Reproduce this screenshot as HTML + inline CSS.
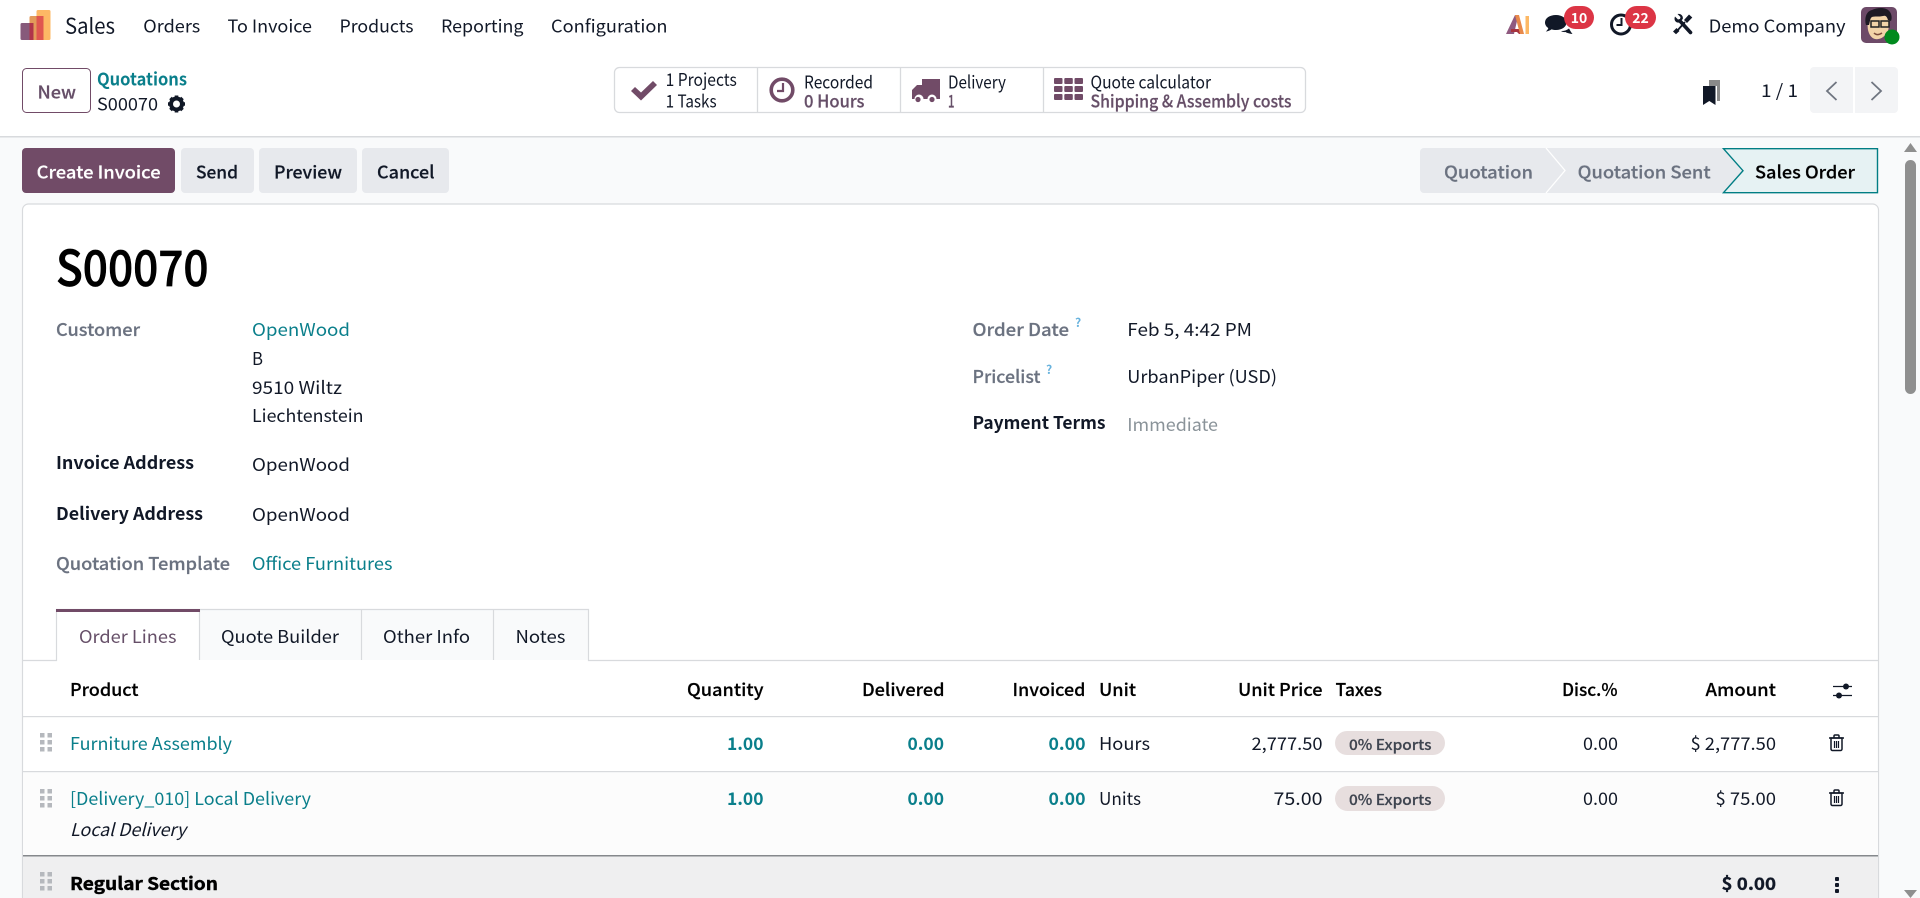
<!DOCTYPE html>
<html lang="en">
<head>
<meta charset="utf-8">
<title>S00070 - Sales</title>
<style>
html,body{margin:0;padding:0;width:1920px;height:898px;overflow:hidden;background:#fff}
svg{display:block}
text{font-family:"Noto Sans CJK JP","Liberation Sans",sans-serif;font-size:17.5px;fill:#111827;white-space:pre}
.m{font-weight:500;stroke:#111827;stroke-width:.2px}
.b{font-weight:700}
.g{fill:#6b7280}
.m.g{stroke:#6b7280}
.l{fill:#0a7f8b}
.p{fill:#664f68}
.m.p{stroke:#664f68}
.n{fill:#0a7f8b;font-weight:700}
</style>
</head>
<body>
<svg width="1920" height="898" viewBox="0 0 1920 898" xmlns="http://www.w3.org/2000/svg">
<!-- backgrounds -->
<rect width="1920" height="898" fill="#f9fafb"/>
<rect width="1920" height="136" fill="#fff"/>
<rect y="136" width="1920" height="1.5" fill="#d8dadd"/>

<!-- logo -->
<rect x="36.5" y="10" width="14" height="30" rx="1.5" fill="#fdb865"/>
<rect x="29.5" y="16" width="14" height="24" rx="1.5" fill="#e39a5a"/>
<rect x="36.5" y="16" width="7" height="24" fill="#e0564f"/>
<rect x="20.5" y="23" width="11" height="17" rx="1.5" fill="#875a7b"/>
<rect x="29.5" y="23" width="4" height="17" fill="#b0344a"/>
<text x="65" y="33.5" style="font-size:21px" textLength="50" lengthAdjust="spacingAndGlyphs">Sales</text>

<!-- menu -->
<text x="143.3" y="32.3" textLength="57" lengthAdjust="spacingAndGlyphs">Orders</text>
<text x="227.5" y="32.3" textLength="84.5" lengthAdjust="spacingAndGlyphs">To Invoice</text>
<text x="339.5" y="32.3" textLength="74" lengthAdjust="spacingAndGlyphs">Products</text>
<text x="441" y="32.3" textLength="82.5" lengthAdjust="spacingAndGlyphs">Reporting</text>
<text x="551" y="32.3" textLength="116.5" lengthAdjust="spacingAndGlyphs">Configuration</text>

<!-- systray -->
<path d="M1506 34l9-19h3l-1 6-3 13z" fill="#8f5a80"/>
<path d="M1511 29h9l2 5h-3l-2-2h-6z" fill="#a8343f"/>
<path d="M1515 15h4l5 19h-4z" fill="#e8894a"/>
<rect x="1525.5" y="16" width="3.5" height="18" fill="#fdb865"/>

<path d="M1556 15c-6.500 0-11 3.200-11 7.500 0 2.300 1.300 4.200 3.300 5.600-.4 1.300-1.300 2.400-2.500 3.400 2.300-.2 4.200-1 5.700-2.100 1.400.4 3 .6 4.500.6 6 0 10.500-3.200 10.500-7.500s-4.500-7.500-10.500-7.500z" fill="#111827"/>
<path d="M1561 31c3 .2 6-.8 8-2.500 1 1.700 1.800 3.500 3.500 5.500-2.700-.2-5.500-1-7-2-1.500.2-3 0-4.500-1z" fill="#111827"/>
<rect x="1564" y="6" width="30" height="23" rx="11.500" fill="#dc3545"/>
<text x="1579" y="23" text-anchor="middle" class="b" style="font-size:14px;fill:#fff">10</text>

<circle cx="1621" cy="24.500" r="9.500" fill="none" stroke="#111827" stroke-width="3"/>
<path d="M1621.500 18v7h-5" fill="none" stroke="#111827" stroke-width="2"/>
<rect x="1625" y="6" width="31" height="23" rx="11.500" fill="#dc3545"/>
<text x="1640.500" y="23" text-anchor="middle" class="b" style="font-size:14px;fill:#fff">22</text>

<!-- tools: wrench + screwdriver -->
<path d="M1680 21l10.500 11.500" stroke="#111827" stroke-width="3.600" fill="none" stroke-linecap="round"/>
<path d="M1675 16.500l3 3 2-.5.5-2-3-3c3-.8 6 1.500 5.300 5l-3.500 3.500c-3.500.7-5.800-2.500-4.300-6z" fill="#111827"/>
<path d="M1677 31l8-9" stroke="#111827" stroke-width="1.800" fill="none"/>
<path d="M1684 20l5-5.500 3.300 3-5.300 5.500zM1673 31.500l3.500-3.500 3 3-3.500 3.300z" fill="#111827"/>
<text x="1708.600" y="32.300" textLength="137" lengthAdjust="spacingAndGlyphs">Demo Company</text>

<!-- avatar -->
<rect x="1861" y="7" width="36" height="36" rx="5" fill="#6d4a68"/>
<path d="M1868 30c-1-8 0-15 6-17 5-2 13-1 15 4 1 4 0 10-1 14-3 6-8 9-13 8-4-1-6-5-7-9z" fill="#f2d3a8"/>
<path d="M1866 25c-2-8 1-14 6-15 6-3 15-3 18 2 2 3 2 7 1 9l-3-1c-1-3-2-5-5-4-4 1-9 0-11 1-2 1-2 5-3 8z" fill="#1e1a24"/>
<rect x="1871" y="21" width="8" height="6" fill="none" stroke="#222" stroke-width="1.500"/>
<rect x="1881" y="21" width="8" height="6" fill="none" stroke="#222" stroke-width="1.500"/>
<path d="M1874 33c2 2 5 2 8 0" fill="none" stroke="#7a4a3a" stroke-width="1.500"/>
<circle cx="1892" cy="37" r="7.500" fill="#008a1e"/>

<!-- New button + breadcrumb -->
<rect x="22.500" y="68.500" width="68" height="44" rx="4" fill="#fff" stroke="#714b67"/>
<text x="37.500" y="98.500" class="m p" textLength="38.500" lengthAdjust="spacingAndGlyphs">New</text>
<text x="97" y="85.500" class="b l" textLength="90" lengthAdjust="spacingAndGlyphs">Quotations</text>
<text x="97" y="110.500" textLength="61" lengthAdjust="spacingAndGlyphs">S00070</text>
<g transform="translate(176.500 104)" fill="#111827">
<circle r="5.500" fill="none" stroke="#111827" stroke-width="4"/>
<path d="M-1.800-8.500h3.600v3.600h-3.600zM-1.800 4.900h3.600v3.600h-3.600zM-8.500-1.800h3.600v3.600h-3.600zM4.900-1.800h3.600v3.600h-3.600z"/>
<path d="M-1.800-8.500h3.600v3.600h-3.600zM-1.800 4.900h3.600v3.600h-3.600zM-8.500-1.800h3.600v3.600h-3.600zM4.900-1.800h3.600v3.600h-3.600z" transform="rotate(45)"/>
</g>

<!-- stat buttons -->
<rect x="614.500" y="67.500" width="691" height="45" rx="5" fill="#fff" stroke="#d8dadd" stroke-width="1.300"/>
<path d="M757.500 68v44M900.500 68v44M1043.500 68v44" stroke="#d8dadd" stroke-width="1.300"/>
<path d="M631 91l4-4 6 5.500L653 81l4 4-16 15.500z" fill="#714b67"/>
<text x="665.600" y="86.200" textLength="71.200" lengthAdjust="spacingAndGlyphs">1 Projects</text>
<text x="665.600" y="107.700" textLength="51" lengthAdjust="spacingAndGlyphs">1 Tasks</text>
<circle cx="782" cy="90" r="10.800" fill="none" stroke="#714b67" stroke-width="3.600"/>
<path d="M783 83v8h-6" fill="none" stroke="#714b67" stroke-width="2.200"/>
<text x="804" y="88.300" textLength="69" lengthAdjust="spacingAndGlyphs">Recorded</text>
<text x="804" y="107.500" class="m p" textLength="60.500" lengthAdjust="spacingAndGlyphs">0 Hours</text>
<path d="M922 79h18v20h-3.500a4.500 4.500 0 0 0-9 0h-4a4.500 4.500 0 0 0-9 0H912V90l5-5h5z" fill="#714b67"/>
<circle cx="918" cy="99.500" r="2.600" fill="#714b67"/><circle cx="932" cy="99.500" r="2.600" fill="#714b67"/>
<text x="948" y="88.300" textLength="58" lengthAdjust="spacingAndGlyphs">Delivery</text>
<text x="948" y="107.500" class="m p" textLength="6.500" lengthAdjust="spacingAndGlyphs">1</text>
<g fill="#714b67">
<rect x="1054" y="78" width="8.500" height="6" rx="1"/><rect x="1064.300" y="78" width="8.500" height="6" rx="1"/><rect x="1074.500" y="78" width="8.500" height="6" rx="1"/>
<rect x="1054" y="86" width="8.500" height="6" rx="1"/><rect x="1064.300" y="86" width="8.500" height="6" rx="1"/><rect x="1074.500" y="86" width="8.500" height="6" rx="1"/>
<rect x="1054" y="94" width="8.500" height="6" rx="1"/><rect x="1064.300" y="94" width="8.500" height="6" rx="1"/><rect x="1074.500" y="94" width="8.500" height="6" rx="1"/>
</g>
<text x="1090.500" y="88.300" textLength="120.500" lengthAdjust="spacingAndGlyphs">Quote calculator</text>
<text x="1090.500" y="107.500" class="m p" textLength="201" lengthAdjust="spacingAndGlyphs">Shipping &amp; Assembly costs</text>

<!-- bookmark + pager -->
<path d="M1709 80h11v21h-3v-15h-8z" fill="#8a8a8a"/>
<path d="M1703 86h12.500v19l-6.200-4-6.300 4z" fill="#111827"/>
<text x="1761" y="97" textLength="37" lengthAdjust="spacingAndGlyphs">1 / 1</text>
<path d="M1810 71a4 4 0 0 1 4-4h39v46h-39a4 4 0 0 1-4-4z" fill="#f3f4f6"/>
<path d="M1855 67h39a4 4 0 0 1 4 4v38a4 4 0 0 1-4 4h-39z" fill="#f3f4f6"/>
<path d="M1836.500 82l-9.500 9 9.500 9" fill="none" stroke="#6f7580" stroke-width="1.800"/>
<path d="M1871.500 82l9.500 9-9.500 9" fill="none" stroke="#6f7580" stroke-width="1.800"/>

<!-- action buttons -->
<rect x="22" y="148" width="153" height="45" rx="4" fill="#714b67"/>
<text x="36.600" y="178.600" class="m" style="fill:#fff;stroke:#fff" textLength="124" lengthAdjust="spacingAndGlyphs">Create Invoice</text>
<rect x="181" y="148" width="73" height="45" rx="4" fill="#e7e9ed"/>
<text x="196" y="178.600" class="m" textLength="42" lengthAdjust="spacingAndGlyphs">Send</text>
<rect x="259" y="148" width="98" height="45" rx="4" fill="#e7e9ed"/>
<text x="274" y="178.600" class="m" textLength="68" lengthAdjust="spacingAndGlyphs">Preview</text>
<rect x="362" y="148" width="87" height="45" rx="4" fill="#e7e9ed"/>
<text x="377" y="178.600" class="m" textLength="57.500" lengthAdjust="spacingAndGlyphs">Cancel</text>

<!-- statusbar -->
<path d="M1424 148h299l20 22.500-20 22.500h-299a4 4 0 0 1-4-4v-37a4 4 0 0 1 4-4z" fill="#e7e9ed"/>
<path d="M1546 148l19 22.500-19 22.500" fill="none" stroke="#fff" stroke-width="1.300"/>
<path d="M1723.500 148.700h154v44h-154l19.500-22z" fill="#e6f2f3" stroke="#017e84" stroke-width="1.400"/>
<text x="1444" y="178.600" class="m g" textLength="89" lengthAdjust="spacingAndGlyphs">Quotation</text>
<text x="1577.700" y="178.600" class="m g" textLength="133" lengthAdjust="spacingAndGlyphs">Quotation Sent</text>
<text x="1755" y="178.600" class="m" style="fill:#000;stroke:#000" textLength="100" lengthAdjust="spacingAndGlyphs">Sales Order</text>

<!-- scrollbar -->
<path d="M1904 152l6.500-9 6.500 9z" fill="#8f8f8f"/>
<rect x="1905" y="160" width="11" height="234" rx="5.500" fill="#8f8f8f"/>
<path d="M1904 890h13l-6.500 8z" fill="#8f8f8f"/>

<!-- sheet -->
<path d="M22.500 904V210a6 6 0 0 1 6-6h1844a6 6 0 0 1 6 6v694z" fill="#fff" stroke="#d8dadd" stroke-width="1.200"/>

<text x="56" y="286" class="m" style="font-size:49px;fill:#000;stroke:#000;stroke-width:.7px" textLength="152.500" lengthAdjust="spacingAndGlyphs">S00070</text>

<!-- form left -->
<text x="56" y="336" class="m g" textLength="84" lengthAdjust="spacingAndGlyphs">Customer</text>
<text x="252" y="336" class="l" textLength="98" lengthAdjust="spacingAndGlyphs">OpenWood</text>
<text x="252" y="365" textLength="11" lengthAdjust="spacingAndGlyphs">B</text>
<text x="252" y="394" textLength="90" lengthAdjust="spacingAndGlyphs">9510 Wiltz</text>
<text x="252" y="422" textLength="111.500" lengthAdjust="spacingAndGlyphs">Liechtenstein</text>
<text x="56" y="469" class="b" textLength="138" lengthAdjust="spacingAndGlyphs">Invoice Address</text>
<text x="252" y="471" textLength="98" lengthAdjust="spacingAndGlyphs">OpenWood</text>
<text x="56" y="520" class="b" textLength="147" lengthAdjust="spacingAndGlyphs">Delivery Address</text>
<text x="252" y="521" textLength="98" lengthAdjust="spacingAndGlyphs">OpenWood</text>
<text x="56" y="570" class="m g" textLength="174" lengthAdjust="spacingAndGlyphs">Quotation Template</text>
<text x="252" y="570" class="l" textLength="140.500" lengthAdjust="spacingAndGlyphs">Office Furnitures</text>

<!-- form right -->
<text x="972.500" y="336" class="m g" textLength="96.500" lengthAdjust="spacingAndGlyphs">Order Date</text>
<text x="1075" y="327" class="b" style="font-size:12px;fill:#67b2dd">?</text>
<text x="1127.300" y="336" textLength="124.700" lengthAdjust="spacingAndGlyphs">Feb 5, 4:42 PM</text>
<text x="972.500" y="383" class="m g" textLength="68" lengthAdjust="spacingAndGlyphs">Pricelist</text>
<text x="1046" y="374" class="b" style="font-size:12px;fill:#67b2dd">?</text>
<text x="1127.300" y="383" textLength="149.700" lengthAdjust="spacingAndGlyphs">UrbanPiper (USD)</text>
<text x="972.500" y="429" class="b" textLength="133" lengthAdjust="spacingAndGlyphs">Payment Terms</text>
<text x="1127.300" y="431" style="fill:#8a9399" textLength="90.700" lengthAdjust="spacingAndGlyphs">Immediate</text>

<!-- tabs -->
<rect x="199" y="609" width="389" height="51" fill="#f9fafb"/>
<path d="M22.500 660.500H56.500V609.500H199.500V660M199.500 609.500H588.500V660.500H1878M361.500 609.500V660M493.500 609.500V660" fill="none" stroke="#d8dadd" stroke-width="1.200"/>
<rect x="56" y="609" width="144" height="3" fill="#714b67"/>
<text x="79" y="643" class="p" textLength="97.500" lengthAdjust="spacingAndGlyphs">Order Lines</text>
<text x="221" y="643" textLength="118" lengthAdjust="spacingAndGlyphs">Quote Builder</text>
<text x="383" y="643" textLength="87" lengthAdjust="spacingAndGlyphs">Other Info</text>
<text x="515.500" y="643" textLength="50" lengthAdjust="spacingAndGlyphs">Notes</text>

<!-- table rows -->
<rect x="23" y="771" width="1855" height="84" fill="#fcfcfc"/>
<rect x="23" y="855" width="1855" height="43" fill="#efeff0"/>
<rect x="23" y="716" width="1855" height="1.200" fill="#d8dadd"/>
<rect x="23" y="771" width="1855" height="1.200" fill="#d8dadd"/>
<rect x="23" y="855" width="1855" height="1.500" fill="#85888c"/>

<!-- table header -->
<g style="fill:#000">
<text x="70" y="696" class="m" style="fill:#000;stroke:#000" textLength="68.500" lengthAdjust="spacingAndGlyphs">Product</text>
<text x="687" y="696" class="m" style="fill:#000;stroke:#000" textLength="76.500" lengthAdjust="spacingAndGlyphs">Quantity</text>
<text x="862" y="696" class="m" style="fill:#000;stroke:#000" textLength="82.500" lengthAdjust="spacingAndGlyphs">Delivered</text>
<text x="1012.500" y="696" class="m" style="fill:#000;stroke:#000" textLength="73" lengthAdjust="spacingAndGlyphs">Invoiced</text>
<text x="1099" y="696" class="m" style="fill:#000;stroke:#000" textLength="37" lengthAdjust="spacingAndGlyphs">Unit</text>
<text x="1238" y="696" class="m" style="fill:#000;stroke:#000" textLength="84.500" lengthAdjust="spacingAndGlyphs">Unit Price</text>
<text x="1335.500" y="696" class="m" style="fill:#000;stroke:#000" textLength="46.500" lengthAdjust="spacingAndGlyphs">Taxes</text>
<text x="1562" y="696" class="m" style="fill:#000;stroke:#000" textLength="55.500" lengthAdjust="spacingAndGlyphs">Disc.%</text>
<text x="1705.500" y="696" class="m" style="fill:#000;stroke:#000" textLength="70.500" lengthAdjust="spacingAndGlyphs">Amount</text>
</g>
<path d="M1833 686.500h19M1833 695.500h19" stroke="#111827" stroke-width="1.300"/>
<circle cx="1846" cy="686.500" r="3" fill="#111827"/><circle cx="1839" cy="695.500" r="3" fill="#111827"/>

<!-- handles -->
<g fill="#b5b8bd">
<path d="M40 733h4.500v4.500h-4.500zM47.500 733h4.500v4.500h-4.500zM40 740h4.500v4.500h-4.500zM47.500 740h4.500v4.500h-4.500zM40 747h4.500v4.500h-4.500zM47.500 747h4.500v4.500h-4.500z"/>
<path d="M40 789h4.500v4.500h-4.500zM47.500 789h4.500v4.500h-4.500zM40 796h4.500v4.500h-4.500zM47.500 796h4.500v4.500h-4.500zM40 803h4.500v4.500h-4.500zM47.500 803h4.500v4.500h-4.500z"/>
<path d="M40 872h4.500v4.500h-4.500zM47.500 872h4.500v4.500h-4.500zM40 879h4.500v4.500h-4.500zM47.500 879h4.500v4.500h-4.500zM40 886h4.500v4.500h-4.500zM47.500 886h4.500v4.500h-4.500z"/>
</g>

<!-- row 1 -->
<text x="70" y="750" class="l" textLength="162" lengthAdjust="spacingAndGlyphs">Furniture Assembly</text>
<text x="727" y="750" class="n" textLength="36.500" lengthAdjust="spacingAndGlyphs">1.00</text>
<text x="907.500" y="750" class="n" textLength="36.500" lengthAdjust="spacingAndGlyphs">0.00</text>
<text x="1048.500" y="750" class="n" textLength="37" lengthAdjust="spacingAndGlyphs">0.00</text>
<text x="1099" y="750" textLength="51" lengthAdjust="spacingAndGlyphs">Hours</text>
<text x="1251.500" y="750" textLength="71" lengthAdjust="spacingAndGlyphs">2,777.50</text>
<rect x="1335" y="731" width="110" height="24" rx="12" fill="#e7dede"/>
<text x="1349" y="750" class="m" style="font-size:14.500px;fill:#3f4550;stroke:#3f4550" textLength="82.500" lengthAdjust="spacingAndGlyphs">0% Exports</text>
<text x="1583" y="750" textLength="35" lengthAdjust="spacingAndGlyphs">0.00</text>
<text x="1690.500" y="750" textLength="85.500" lengthAdjust="spacingAndGlyphs">$ 2,777.50</text>
<g fill="none" stroke="#111827" stroke-width="1.500">
<path d="M1829 738h15M1834 738v-2a1 1 0 0 1 1-1h3a1 1 0 0 1 1 1v2"/>
<path d="M1831 738v11a1.500 1.500 0 0 0 1.500 1.500h8a1.500 1.500 0 0 0 1.500-1.500v-11z"/>
<path d="M1834.500 741v7M1836.500 741v7M1838.500 741v7" stroke-width="1.200"/>
</g>

<!-- row 2 -->
<text x="70" y="805" class="l" textLength="241" lengthAdjust="spacingAndGlyphs">[Delivery_010] Local Delivery</text>
<text x="70" y="836" font-style="italic" textLength="116" lengthAdjust="spacingAndGlyphs">Local Delivery</text>
<text x="727" y="805" class="n" textLength="36.500" lengthAdjust="spacingAndGlyphs">1.00</text>
<text x="907.500" y="805" class="n" textLength="36.500" lengthAdjust="spacingAndGlyphs">0.00</text>
<text x="1048.500" y="805" class="n" textLength="37" lengthAdjust="spacingAndGlyphs">0.00</text>
<text x="1099" y="805" textLength="42" lengthAdjust="spacingAndGlyphs">Units</text>
<text x="1273.500" y="805" textLength="49" lengthAdjust="spacingAndGlyphs">75.00</text>
<rect x="1335" y="786" width="110" height="25" rx="12.500" fill="#e7dede"/>
<text x="1349" y="805" class="m" style="font-size:14.500px;fill:#3f4550;stroke:#3f4550" textLength="82.500" lengthAdjust="spacingAndGlyphs">0% Exports</text>
<text x="1583" y="805" textLength="35" lengthAdjust="spacingAndGlyphs">0.00</text>
<text x="1715.500" y="805" textLength="60.500" lengthAdjust="spacingAndGlyphs">$ 75.00</text>
<g fill="none" stroke="#111827" stroke-width="1.500" transform="translate(0 55)">
<path d="M1829 738h15M1834 738v-2a1 1 0 0 1 1-1h3a1 1 0 0 1 1 1v2"/>
<path d="M1831 738v11a1.500 1.500 0 0 0 1.500 1.500h8a1.500 1.500 0 0 0 1.500-1.500v-11z"/>
<path d="M1834.500 741v7M1836.500 741v7M1838.500 741v7" stroke-width="1.200"/>
</g>

<!-- section -->
<text x="70" y="890" class="b" style="fill:#000;stroke:#000;stroke-width:.4px" textLength="148" lengthAdjust="spacingAndGlyphs">Regular Section</text>
<text x="1721.500" y="890" class="b" style="stroke:#111827;stroke-width:.3px" textLength="54.500" lengthAdjust="spacingAndGlyphs">$ 0.00</text>
<g fill="#111827"><rect x="1835" y="877" width="4" height="4" rx="1"/><rect x="1835" y="883" width="4" height="4" rx="1"/><rect x="1835" y="889" width="4" height="4" rx="1"/></g>
</svg>
</body>
</html>
